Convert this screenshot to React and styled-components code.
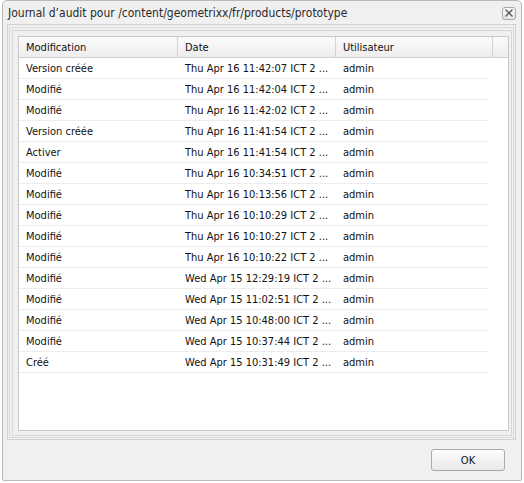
import React from "react";
import styled, { createGlobalStyle } from "styled-components";

const Global = createGlobalStyle`
  html, body { margin: 0; padding: 0; background: #ffffff; }
  body { font-family: Tahoma, "DejaVu Sans", sans-serif; }
`;

const Window = styled.div`
  box-sizing: border-box;
  margin-left: 2px;
  width: 520px;
  height: 481px;
  background: #f0f0f0;
  border: 1px solid #b9b9b9;
  border-radius: 5px 5px 2px 2px;
  display: flex;
  flex-direction: column;
`;

const TitleBar = styled.div`
  height: 23px;
  display: flex;
  align-items: center;
  justify-content: space-between;
  padding: 0 5px 0 5px;
`;

const Title = styled.div`
  font-family: "DejaVu Sans Condensed", "DejaVu Sans", sans-serif;
  font-size: 12px;
  color: #2a2a2a;
`;

const CloseBtn = styled.div`
  box-sizing: border-box;
  width: 14px;
  height: 13px;
  border: 1px solid #a8a8a8;
  border-radius: 3px;
  background: linear-gradient(#fafafa, #e6e6e6);
  display: flex;
  align-items: center;
  justify-content: center;
  margin-top: 1px;
`;

const FrameA = styled.div`
  margin: 0 5px 0 4px;
  border: 1px solid #d2d2d2;
  padding: 2px 1px 1px 1px;
  height: 416px;
  box-sizing: border-box;
  display: flex;
`;

const FrameB = styled.div`
  flex: 1;
  border: 1px solid #dadada;
  padding: 2px 1px 1px 2px;
  display: flex;
`;

const FrameC = styled.div`
  flex: 1;
  border: 1px solid #d6d6d6;
  padding: 5px 2px 4px 5px;
  display: flex;
`;

const Grid = styled.div`
  flex: 1;
  border: 1px solid #c9c9c9;
  background: #fff;
  display: flex;
  flex-direction: column;
  font-family: "DejaVu Sans Condensed", "DejaVu Sans", sans-serif;
  font-size: 11px;
  color: #111;
`;

const HeaderRow = styled.div`
  display: flex;
  height: 20px;
  border-bottom: 1px solid #d0d0d0;
  background: linear-gradient(#fbfbfb, #ededed);
`;

const HeadCell = styled.div`
  box-sizing: border-box;
  width: ${(p) => p.$w}px;
  flex: ${(p) => (p.$grow ? 1 : "none")};
  border-right: ${(p) => (p.$last ? "none" : "1px solid #d3d3d3")};
  padding-left: 7px;
  padding-top: 1px;
  display: flex;
  align-items: center;
  white-space: nowrap;
  overflow: hidden;
`;

const Row = styled.div`
  display: flex;
  width: 470px;
  height: 20px;
  border-bottom: 1px solid #ededed;
`;

const Cell = styled.div`
  box-sizing: border-box;
  width: ${(p) => p.$w}px;
  padding-left: 7px;
  display: flex;
  align-items: center;
  white-space: nowrap;
  overflow: hidden;
`;

const Footer = styled.div`
  flex: 1;
  display: flex;
  justify-content: flex-end;
  align-items: flex-start;
  padding: 9px 16px 0 0;
`;

const OkButton = styled.button`
  box-sizing: border-box;
  width: 74px;
  height: 22px;
  border: 1px solid #a9a9a9;
  border-radius: 3px;
  background: linear-gradient(#fdfdfd, #e9e9e9);
  font-family: "DejaVu Sans Condensed", "DejaVu Sans", sans-serif;
  font-size: 11px;
  color: #111;
  padding: 0;
`;

const rows = [
  ["Version créée", "Thu Apr 16 11:42:07 ICT 2 ..."],
  ["Modifié", "Thu Apr 16 11:42:04 ICT 2 ..."],
  ["Modifié", "Thu Apr 16 11:42:02 ICT 2 ..."],
  ["Version créée", "Thu Apr 16 11:41:54 ICT 2 ..."],
  ["Activer", "Thu Apr 16 11:41:54 ICT 2 ..."],
  ["Modifié", "Thu Apr 16 10:34:51 ICT 2 ..."],
  ["Modifié", "Thu Apr 16 10:13:56 ICT 2 ..."],
  ["Modifié", "Thu Apr 16 10:10:29 ICT 2 ..."],
  ["Modifié", "Thu Apr 16 10:10:27 ICT 2 ..."],
  ["Modifié", "Thu Apr 16 10:10:22 ICT 2 ..."],
  ["Modifié", "Wed Apr 15 12:29:19 ICT 2 ..."],
  ["Modifié", "Wed Apr 15 11:02:51 ICT 2 ..."],
  ["Modifié", "Wed Apr 15 10:48:00 ICT 2 ..."],
  ["Modifié", "Wed Apr 15 10:37:44 ICT 2 ..."],
  ["Créé", "Wed Apr 15 10:31:49 ICT 2 ..."],
];

export default function App() {
  return (
    <>
      <Global />
      <Window>
        <TitleBar>
          <Title>Journal d’audit pour /content/geometrixx/fr/products/prototype</Title>
          <CloseBtn>
            <svg width="8" height="8" viewBox="0 0 8 8">
              <path d="M0.5 0.5 L7.5 7.5 M7.5 0.5 L0.5 7.5" stroke="#555" strokeWidth="1.3" />
            </svg>
          </CloseBtn>
        </TitleBar>
        <FrameA>
          <FrameB>
            <FrameC>
              <Grid>
                <HeaderRow>
                  <HeadCell $w={159}>Modification</HeadCell>
                  <HeadCell $w={158}>Date</HeadCell>
                  <HeadCell $w={157}>Utilisateur</HeadCell>
                  <HeadCell $grow $last />
                </HeaderRow>
                {rows.map(([m, d], i) => (
                  <Row key={i}>
                    <Cell $w={159}>{m}</Cell>
                    <Cell $w={158}>{d}</Cell>
                    <Cell $w={153}>admin</Cell>
                  </Row>
                ))}
              </Grid>
            </FrameC>
          </FrameB>
        </FrameA>
        <Footer>
          <OkButton>OK</OkButton>
        </Footer>
      </Window>
    </>
  );
}
